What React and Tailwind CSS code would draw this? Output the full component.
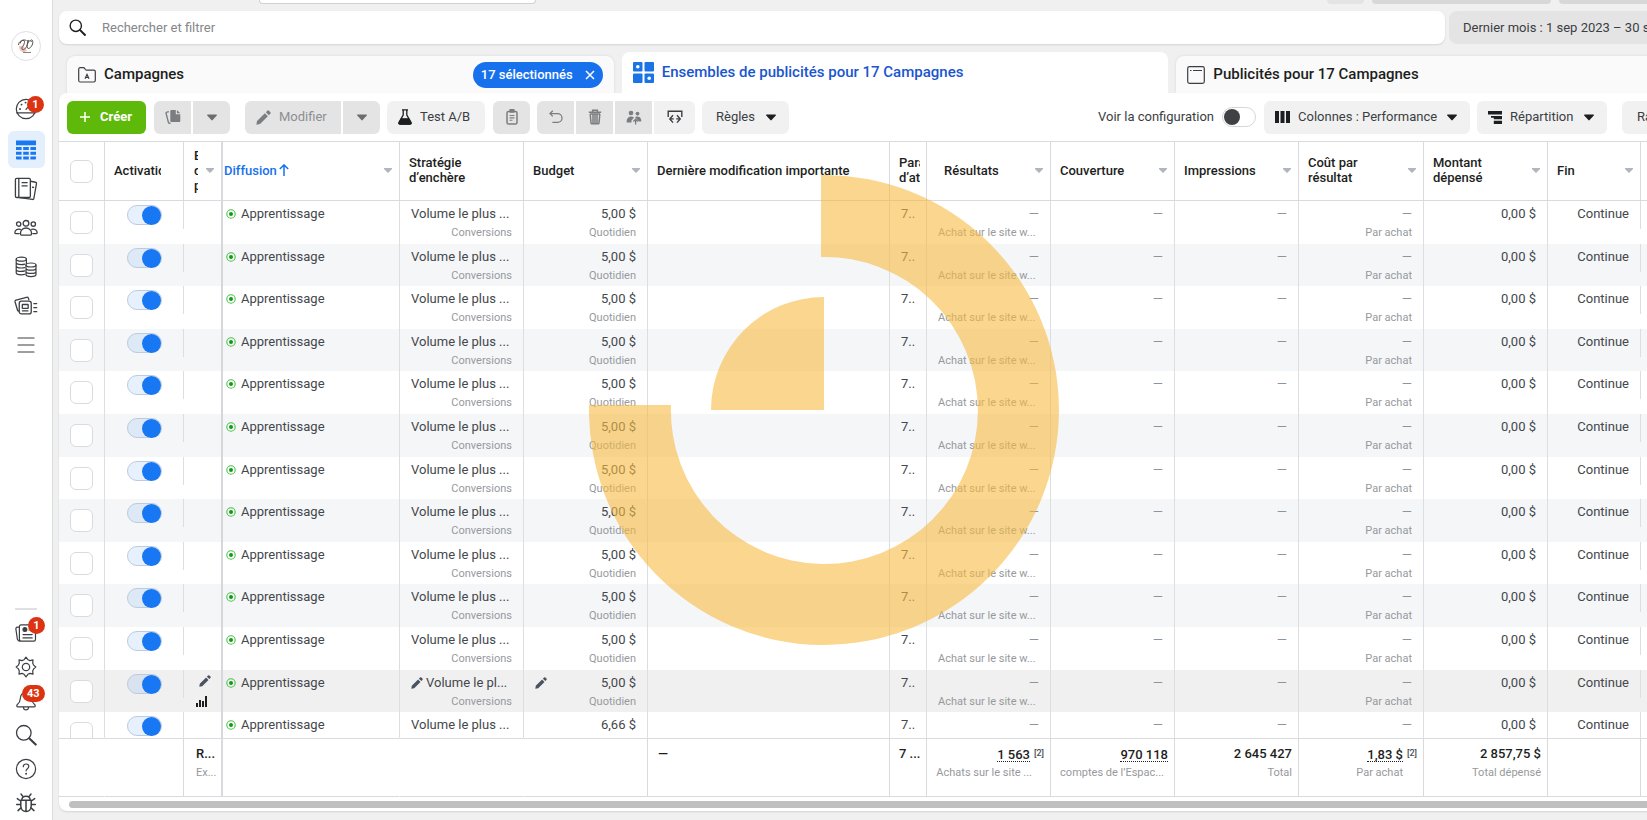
import { useState } from 'react';

const COLUMNS = [
  { id: 'diffusion', label: 'Diffusion', width: 'w-[177px]', sorted: true, caret: true },
  { id: 'strategie', label: 'Stratégie d’enchère', width: 'w-[124px]' },
  { id: 'budget', label: 'Budget', width: 'w-[124px]', caret: true },
  { id: 'modification', label: 'Dernière modification importante', width: 'w-[242px]' },
  { id: 'attribution', label: 'Paramètre d’attribution', width: 'w-[37px]', clipped: true },
  { id: 'resultats', label: 'Résultats', width: 'w-[124px]', caret: true, indent: true },
  { id: 'couverture', label: 'Couverture', width: 'w-[124px]', caret: true },
  { id: 'impressions', label: 'Impressions', width: 'w-[124px]', caret: true },
  { id: 'cout', label: 'Coût par résultat', width: 'w-[125px]', caret: true },
  { id: 'montant', label: 'Montant dépensé', width: 'w-[124px]', caret: true },
  { id: 'fin', label: 'Fin', width: 'w-[93px]', caret: true },
]

const ROWS = Array.from({ length: 13 }, (_, i) => ({
  id: i + 1,
  budget: i === 12 ? '6,66 $' : '5,00 $',
  hovered: i === 11,
}))

/* ---------- icons ---------- */

const Line = ({ size = 22, children, width = 1.2, className = '' }) => (
  <svg width={size} height={size} viewBox="0 0 22 22" fill="none" stroke="currentColor" strokeWidth={width} strokeLinecap="round" strokeLinejoin="round" className={className}>
    {children}
  </svg>
)

const Caret = ({ className = 'text-[#1c1e21]' }) => (
  <svg width="10" height="7" viewBox="0 0 10 7" className={`shrink-0 ${className}`}>
    <path d="M.6.5h8.8c.5 0 .7.6.4.9L5.6 6.1a.8.8 0 0 1-1.2 0L.2 1.4C-.1 1.1.1.5.6.5z" fill="currentColor" />
  </svg>
)

const HeaderCaret = () => (
  <svg width="8" height="5" viewBox="0 0 8 5" className="shrink-0 text-[#b0b6c0]">
    <path d="M0 0h8v1L4.6 4.6a.8.8 0 0 1-1.2 0L0 1z" fill="currentColor" />
  </svg>
)

const PencilIcon = ({ size = 12 }) => (
  <svg width={size} height={size} viewBox="0 0 12 12" fill="currentColor" className="shrink-0">
    <path d="M.3 11.7l.5-2.9 6.3-6.3 2.4 2.4-6.3 6.3zM7.9 1.7l1.1-1.1a1 1 0 0 1 1.4 0l1 1a1 1 0 0 1 0 1.4l-1.1 1.1z" />
  </svg>
)

const GaugeIcon = () => (
  <Line>
    <circle cx="11" cy="11" r="9.7" />
    <path d="M1.8 14.8h18.4M11 11.4l3.6-4.2" />
    <path d="M5 11h.1M6.5 6.6h.1M10.5 4.6h.1M16.8 11h.1" strokeWidth="1.8" />
  </Line>
)

const TableIcon = () => (
  <svg width="20" height="20" viewBox="0 0 20 20" fill="#1877f2">
    <path d="M0 .5h20v4.700H0zM0 7h5.600v3H0zM7.200 7h5.600v3H7.200zM14.400 7H20v3h-5.600zM0 11.700h5.600v3H0zM7.200 11.700h5.600v3H7.200zM14.400 11.700H20v3h-5.600zM0 16.400h5.600v3H1a1 1 0 0 1-1-1zM7.200 16.400h5.600v3H7.200zM14.400 16.400H20v2a1 1 0 0 1-1 1h-4.600z" />
  </svg>
)

const PagesIcon = () => (
  <Line size={24}>
    <path d="M2.5 1.2h11.3c.8 0 1.2.4 1.2 1.2v15.2c0 .8-.4 1.2-1.2 1.2H2.5c-.8 0-1.2-.4-1.2-1.2V2.4c0-.8.4-1.2 1.2-1.2zM4.4 1.2v17.6M7.4 5.200h4.600M7.400 8.200h4.600" />
    <path d="M15.200 3.900l4.500.9c.7.1 1 .5.9 1.200l-2.400 13.700c-.1.700-.5 1-1.200.9L5.200 18.900M17 9.400l.9.200" />
  </Line>
)

const PeopleIcon = () => (
  <Line size={24}>
    <circle cx="11" cy="6.700" r="2.600" />
    <circle cx="4.300" cy="7.400" r="2" />
    <circle cx="17.700" cy="7.400" r="2" />
    <path d="M6 16.800v-1.400a5 4.400 0 0 1 10 0v1.400c0 .5-.2.700-.7.700H6.700c-.5 0-.7-.2-.7-.7zM5.800 12.200c-2.800-.7-5 .9-5 3.200 0 .5.200.7.700.7h3.200M16.200 12.200c2.800-.7 5 .9 5 3.200 0 .5-.2.700-.7.700h-3.200" />
  </Line>
)

const CoinsIcon = () => (
  <Line>
    <ellipse cx="6.300" cy="3.200" rx="5.100" ry="2" />
    <path d="M1.200 3.200v13.600c0 1.200 2.300 2 5.100 2 1.200 0 2.600-.2 3.600-.5M11.400 3.200v4.200M1.200 6.600c0 1.200 2.300 2 5.100 2 1.300 0 2.600-.2 3.500-.5M1.200 10c0 1.200 2.300 2 5.100 2 1.200 0 2.400-.1 3.300-.4M1.200 13.400c0 1.200 2.300 2 5.100 2 1.200 0 2.600-.2 3.500-.5" />
    <ellipse cx="16" cy="9" rx="5" ry="2" />
    <path d="M11 9v9.600c0 1.200 2.200 2 5 2s5-.8 5-2V9M11 12.200c0 1.200 2.200 2 5 2s5-.8 5-2M11 15.400c0 1.200 2.200 2 5 2s5-.8 5-2" />
  </Line>
)

const CardsIcon = () => (
  <Line size={24}>
    <rect x="4.800" y="6.600" width="11" height="11.600" rx="2" />
    <rect x="7.600" y="9.600" width="5.400" height="3.600" rx=".4" />
    <path d="M7.800 15.500h5M18.200 8.800h2.600M18.200 12.500h2.600M18.200 16.200h2.600M4.400 15.700l-1-.4-2.400-8c-.2-.8.1-1.500.9-1.700l9.600-2.600c.8-.2 1.400.1 1.700.8l.4 1.400" />
  </Line>
)

const MenuIcon = () => (
  <Line>
    <path d="M3 4h16M3 11h16M3 18h16" />
  </Line>
)

const NewsIcon = () => (
  <Line>
    <path d="M6.200 2.800h12.600c1 0 1.700.6 1.700 1.700v12.800c0 1.200-.6 1.900-1.700 1.900H4.700c-1 0-1.700-.5-2.300-1.900L.9 7.200c-.2-1.200.3-1.900 1.600-2.100h1.700M6.200 2.800c-1 0-1.800.6-1.800 1.700v12.600c0 1.300.6 2.100 1.800 2.100" />
    <path d="M8 12.600h9.200M8 15.900h9.200M14 8h3" />
    <circle cx="9.900" cy="7.600" r="1.900" fill="currentColor" />
  </Line>
)

const GearIcon = () => (
  <Line>
    <circle cx="11" cy="11" r="3.700" />
    <path d="M11 1.200l1.900 2.500 2.100.9 3-.7-.3 3.100.9 2.100 2.200 1.900-2.200 1.900-.9 2.100.3 3.100-3-.7-2.100.9L11 20.800l-1.900-2.500-2.100-.9-3 .7.300-3.100-.9-2.100L1.200 11l2.200-1.900.9-2.100L4 3.900l3 .7 2.100-.9z" />
  </Line>
)

const BellIcon = () => (
  <Line>
    <path d="M11 2.500c-3.600 0-5.400 2.500-5.600 5.800-.2 3.200-.8 4.500-3 6.200-1.100.9-.8 2.400.7 2.400h15.800c1.500 0 1.800-1.500.7-2.400-2.200-1.700-2.800-3-3-6.200-.2-3.300-2-5.800-5.600-5.800zM8.400 17.200c.2 1.700 1.200 2.700 2.600 2.700s2.400-1 2.600-2.700" />
  </Line>
)

const SearchIcon = ({ size = 22, width = 1.3 }) => (
  <Line size={size} width={width}>
    <circle cx="8.800" cy="8.800" r="7.300" />
    <path d="M14.400 14.400l6.300 6.200" strokeWidth={width + 0.8} />
  </Line>
)

const HelpIcon = () => (
  <Line>
    <circle cx="11" cy="11" r="9.600" />
    <path d="M8.300 8.700c0-1.700 1.200-2.700 2.800-2.700s2.700 1 2.700 2.500c0 2.200-2.700 2.200-2.700 4.300" />
    <path d="M11.100 15.600v.1" strokeWidth="1.900" />
  </Line>
)

const BugIcon = () => (
  <Line width={1.5}>
    <path d="M5.800 8.200h10.400v5.900c0 3.200-2.200 5.500-5.200 5.500s-5.200-2.300-5.200-5.500zM6.800 8.200c0-2.500 1.700-4 4.200-4s4.200 1.500 4.200 4M11 8.200v11.400M8 4.600L6 2M14 4.600L16 2M5.600 9L2.300 6.600M16.400 9l3.300-2.400M5.600 12.600H1.700M16.400 12.600h3.900M6.200 15.600L3 18.600M15.800 15.600l3.200 3" />
  </Line>
)

/* ---------- side bar ---------- */

const TOP_LINKS = [
  { label: 'Ads Manager', icon: TableIcon, active: true },
  { label: 'Pages', icon: PagesIcon },
  { label: 'Audiences', icon: PeopleIcon },
  { label: 'Facturation', icon: CoinsIcon },
  { label: 'Publicités', icon: CardsIcon },
  { label: 'Tous les outils', icon: MenuIcon },
]

const BOTTOM_LINKS = [
  { label: 'Actualités', icon: NewsIcon, badge: '1' },
  { label: 'Paramètres', icon: GearIcon },
  { label: 'Notifications', icon: BellIcon, badge: '43' },
  { label: 'Rechercher', icon: SearchIcon },
  { label: 'Aide', icon: HelpIcon },
  { label: 'Signaler un problème', icon: BugIcon },
]

const Badge = ({ children, className }) => (
  <span className={`absolute flex h-[17px] items-center justify-center rounded-full bg-[#dc3312] text-[11px] font-bold leading-none text-white ${className}`}>
    {children}
  </span>
)

function SideBar() {
  return (
    <nav className="flex w-[53px] shrink-0 flex-col items-center border-r border-[#dcdddf] bg-white text-[#3b3e43]">
      <a href="#compte" aria-label="Compte" className="mt-[31px] flex size-[30px] items-center justify-center rounded-full border border-[#dddfe2]">
        <svg width="18" height="18" viewBox="0 0 18 18" fill="none">
          <path d="M2 9c2-1 5 0 7 3s-1 3-3 3-4-3-4-6z" fill="#eec3b3" />
          <path d="M3 6.500c1-3.500 5-4.500 4.500-1s-3.500 5-2.500 6.500 3 .5 4.500-2.500 2-5 1.500-6.500c-.5 3.500-1.500 6.500-.5 8s4-.5 5-4-.5-5-2-3.500M1.500 8c0-4 5-6 8-4.500M10.500 6c1-2 3.500-3.500 4-1" stroke="#55504d" strokeWidth="1" />
          <path d="M6 15.500h8" stroke="#8b8380" strokeWidth="1" />
        </svg>
      </a>

      <a href="#apercu" aria-label="Aperçu du compte" className="relative mb-0.5 mt-7 flex h-[39px] w-full items-center justify-center">
        <GaugeIcon />
        <Badge className="left-[27px] top-[7px] w-[17px]">1</Badge>
      </a>
      {TOP_LINKS.map(({ label, icon: Icon, active }) => (
        <a key={label} href="#outil" aria-label={label} className="flex h-[39px] w-full items-center justify-center">
          <span className={`flex size-[37px] items-center justify-center rounded-md ${active ? 'bg-[#e4effd]' : ''}`}>
            <Icon />
          </span>
        </a>
      ))}

      <div className="mt-auto h-0.5 w-[22px] bg-[#dfe0e2]" />
      <div className="mt-[6px] w-full">
        {BOTTOM_LINKS.map(({ label, icon: Icon, badge }) => (
          <a key={label} href="#outil" aria-label={label} className="relative flex h-[34px] items-center justify-center">
            <Icon />
            {badge && <Badge className={badge.length > 1 ? 'left-[22px] top-px px-[5px]' : 'left-7 top-px w-[17px]'}>{badge}</Badge>}
          </a>
        ))}
      </div>
    </nav>
  )
}

/* ---------- top part ---------- */

function SearchRow() {
  return (
    <div className="mt-[7px] flex gap-1">
      <label className="flex h-[33px] flex-1 items-center rounded-lg bg-white pl-[10px] text-[#1c1e21] shadow-[0_1px_2px_rgba(0,0,0,0.12)]">
        <SearchIcon size={17} width={1.8} />
        <input
          type="text"
          aria-label="Rechercher et filtrer"
          placeholder="Rechercher et filtrer"
          className="ml-4 h-8 flex-1 text-[13px] outline-none placeholder:text-[#84878c]"
        />
      </label>
      <button className="flex h-[33px] w-[282px] items-center justify-between whitespace-nowrap rounded-lg bg-[#e4e4e4] px-[14px] text-[13px] text-[#3b3e43]">
        Dernier mois : 1 sep 2023 – 30 sep 2023
        <Caret />
      </button>
    </div>
  )
}

function Tabs() {
  return (
    <div className="mt-2 grid grid-cols-3 items-end gap-2 px-2 text-[15px] font-medium text-[#1c1e21]">
      <div className="flex h-[37px] items-center rounded-t-lg bg-[#fafafa] pl-[11px] pr-[11px] shadow-[0_0_3px_rgba(0,0,0,0.10)]">
        <button className="flex items-center gap-2">
          <svg width="18" height="16" viewBox="0 0 18 16" fill="none" stroke="#3b3e43" strokeWidth="1.2">
            <path d="M.7 13.300V2.200C.7 1.300 1.200.7 2.200.7h3.200c.6 0 .9.200 1.200.6l.8 1.200c.3.400.6.600 1.200.6h7.200c1 0 1.500.5 1.500 1.500v8.700c0 1.100-.5 1.700-1.500 1.700H2.200c-1 0-1.500-.6-1.500-1.700z" />
            <path d="M7 11.800l2-4.300 2 4.300M7.800 10.500h2.400" />
          </svg>
          Campagnes
        </button>
        <button className="ml-auto flex h-[26px] items-center gap-3 rounded-full bg-[#1771ed] px-2 text-[13px] font-medium text-white">
          17 sélectionnés
          <svg width="10" height="10" viewBox="0 0 10 10" stroke="currentColor" strokeWidth="1.5">
            <path d="M1 1l8 8M9 1L1 9" />
          </svg>
        </button>
      </div>
      <button className="flex h-[41px] items-center gap-2 rounded-t-lg bg-white pl-[11px] text-[#1a56cf]">
        <svg width="21" height="21" viewBox="0 0 21 21" fill="#1b74e4">
          <rect width="9.500" height="9.500" rx="1" />
          <rect x="11.500" width="9.500" height="9.500" rx="1" />
          <rect y="11.500" width="9.500" height="9.500" rx="1" />
          <rect x="11.500" y="11.500" width="9.500" height="9.500" rx="1" />
          <circle cx="4.800" cy="4.800" r="1.800" fill="#fff" />
          <circle cx="16.200" cy="16.200" r="1.800" fill="#fff" />
        </svg>
        Ensembles de publicités pour 17 Campagnes
      </button>
      <button className="flex h-[37px] items-center gap-2 rounded-t-lg bg-[#fafafa] pl-[11px] shadow-[0_0_3px_rgba(0,0,0,0.10)]">
        <svg width="18" height="18" viewBox="0 0 18 18" fill="none" stroke="#3b3e43" strokeWidth="1.2">
          <rect x=".7" y=".7" width="16.600" height="16.600" rx="1.800" />
          <path d="M6 4.500h9M3 4.500h1.500" />
        </svg>
        Publicités pour 17 Campagnes
      </button>
    </div>
  )
}

function ToolBar() {
  const [config, setConfig] = useState(false)

  return (
    <div className="flex h-12 items-center whitespace-nowrap px-2 text-[13px] text-[#3b3e43]">
      <button className="flex h-[33px] w-[79px] items-center gap-[10px] rounded-md bg-[#5fb90b] pl-[13px] font-bold text-white">
        <svg width="10" height="10" viewBox="0 0 10 10" stroke="currentColor" strokeWidth="1.5"><path d="M5 0v10M0 5h10" /></svg>
        Créer
      </button>

      <div className="ml-2 flex gap-0.5 text-[#7b7d80]">
        <button aria-label="Dupliquer" className="flex h-[33px] w-[37px] items-center justify-center rounded-l-md bg-[#e4e4e4]">
          <svg width="16" height="16" viewBox="0 0 16 16" fill="currentColor">
            <path d="M6.500 1h4.300v4.200h4.500v6.600c0 .8-.4 1.200-1.200 1.200H6.500c-.8 0-1.200-.4-1.200-1.200V2.200C5.300 1.400 5.700 1 6.500 1zM11.900 1l3.400 3.200h-3.400z" />
            <path d="M3.900 2.600l-2 .5c-.7.200-1 .6-.8 1.300l2.300 9c.2.700.6 1 1.300.8l.8-.2" fill="none" stroke="currentColor" strokeWidth="1.4" />
          </svg>
        </button>
        <button aria-label="Options de duplication" className="flex h-[33px] w-[37px] items-center justify-center rounded-r-md bg-[#e4e4e4]"><Caret className="text-[#6b6d70]" /></button>
      </div>

      <div className="ml-[15px] flex gap-0.5 text-[#8d8f92]">
        <button className="flex h-[33px] w-24 items-center gap-2 rounded-l-md bg-[#e4e4e4] pl-[11px]">
          <span className="text-[#7b7d80]"><PencilIcon size={15} /></span>
          Modifier
        </button>
        <button aria-label="Options de modification" className="flex h-[33px] w-[37px] items-center justify-center rounded-r-md bg-[#e4e4e4]"><Caret className="text-[#6b6d70]" /></button>
      </div>

      <button className="ml-[7px] flex h-[33px] w-[98px] items-center gap-2 rounded-md bg-[#f1f1f1] pl-[11px]">
        <svg width="14" height="16" viewBox="0 0 14 16" fill="none" stroke="#1c1e21" strokeWidth="1.3">
          <path d="M4 .8h6M5.200 1v5L1 13.400c-.5 1 0 1.700 1 1.700h10c1 0 1.500-.7 1-1.700L8.800 6V1" />
          <path d="M3.300 9.800h7.400l2.100 4.300-.8.900H2l-.8-.9z" fill="#1c1e21" />
        </svg>
        Test A/B
      </button>

      <button aria-label="Presse-papiers" className="ml-2 flex h-[33px] w-[37px] items-center justify-center rounded-md bg-[#e4e4e4] text-[#7b7d80]">
        <svg width="12" height="16" viewBox="0 0 12 16" fill="none" stroke="currentColor" strokeWidth="1.5">
          <rect x="1" y="2.500" width="10" height="12.500" rx="1.600" />
          <path d="M3.600 6.500h4.800M3.600 8.900h4.800M3.600 11.300h2.800" strokeWidth="1.1" />
          <rect x="3.300" y="0" width="5.400" height="3.800" rx="1" fill="currentColor" stroke="none" />
        </svg>
      </button>

      <div className="ml-[7px] flex gap-0.5 text-[#7b7d80]">
        <button aria-label="Annuler" className="flex h-[33px] w-[37px] items-center justify-center rounded-l-md bg-[#e4e4e4]">
          <svg width="14" height="14" viewBox="0 0 14 14" fill="none" stroke="currentColor" strokeWidth="1.3">
            <path d="M3.800.8L1 3.600l2.800 2.800M1 3.600h7.600a4.200 4.200 0 0 1 0 8.800H3.400" />
          </svg>
        </button>
        <button aria-label="Supprimer" className="flex h-[33px] w-[37px] items-center justify-center bg-[#e4e4e4]">
          <svg width="14" height="16" viewBox="0 0 14 16" fill="none" stroke="currentColor" strokeWidth="1.5">
            <path d="M.8 3.200h12.400M4.600 3V1.200h4.800V3M2.200 5l.8 8.900c0 .6.400.9.900.9h6.200c.5 0 .9-.3.900-.9l.8-8.900M5 5v9M7 5v9M9 5v9M2 5h10" />
          </svg>
        </button>
        <button aria-label="Partager" className="flex h-[33px] w-[37px] items-center justify-center bg-[#e4e4e4]">
          <svg width="16" height="15" viewBox="0 0 16 15" fill="currentColor">
            <circle cx="5" cy="3" r="2.300" />
            <circle cx="11.500" cy="3.600" r="1.900" />
            <path d="M.7 12.500C.4 9 2.200 6.600 5 6.600c1.300 0 2.300.4 3 1.200L5.500 10.600v1.900zM9.300 6.900c2.800-1.300 6 .5 6 3.600 0 .8-.3 1-1 1h-1.400l-3.200-3.600z" />
            <path d="M7.400 11.500l2.200-2.300 2.200 2.300M9.600 9.500v5" fill="none" stroke="currentColor" strokeWidth="1.3" />
          </svg>
        </button>
        <button aria-label="Échanger" className="flex h-[33px] w-[41px] items-center justify-center rounded-r-md bg-[#f1f1f1] text-[#3b3e43]">
          <svg width="16" height="15" viewBox="0 0 16 15" fill="none" stroke="currentColor" strokeWidth="1.4">
            <path d="M1.200 7V1.200h13.600V7" />
            <path d="M6 5.200L2.800 8.900 6 12.600M10 5.200l3.200 3.700-3.200 3.700M3.200 8.900h3.600M12.800 8.900H9.200" />
          </svg>
        </button>
      </div>

      <button className="ml-[7px] flex h-[33px] w-[87px] items-center justify-between rounded-md bg-[#f1f1f1] pl-[14px] pr-[13px]">
        Règles
        <Caret />
      </button>

      <div className="ml-auto flex items-center">
        <label className="flex cursor-pointer items-center gap-2">
          Voir la configuration
          <input type="checkbox" checked={config} onChange={() => setConfig(prev => !prev)} className="peer sr-only" />
          <span className="flex h-5 w-[34px] items-center rounded-full border border-[#d5d6d8] bg-white px-px peer-checked:justify-end">
            <span className="size-4 rounded-full bg-[#3f4144]" />
          </span>
        </label>
        <button className="ml-2 flex h-[33px] w-[206px] items-center rounded-md bg-[#f1f1f1] pl-[11px] pr-[13px]">
          <svg width="15" height="12" viewBox="0 0 15 12" fill="#1c1e21" className="mr-2"><path d="M0 0h4v12H0zM5.500 0h4v12h-4zM11 0h4v12h-4z" /></svg>
          Colonnes : Performance
          <span className="ml-auto"><Caret /></span>
        </button>
        <button className="ml-[7px] flex h-[33px] w-[130px] items-center rounded-md bg-[#f1f1f1] pl-[11px] pr-[13px]">
          <svg width="14" height="13" viewBox="0 0 14 13" fill="#1c1e21" className="mr-2"><path d="M0 0h14v3.400H0zM3 5h11v3.200H5.800v-1.400H3zM5.800 9.700H14V13H5.800z" /></svg>
          Répartition
          <span className="ml-auto"><Caret /></span>
        </button>
        <button className="ml-[15px] flex h-[33px] w-[101px] items-center justify-between rounded-md bg-[#f1f1f1] pl-[15px] pr-[13px]">
          Rapports
          <Caret />
        </button>
      </div>
    </div>
  )
}

/* ---------- table ---------- */

const CheckBox = ({ label }) => (
  <input type="checkbox" aria-label={label} className="mx-auto block size-[23px] appearance-none rounded-md border border-[#d9dbde] bg-white checked:bg-[#1877f2]" />
)

function HeadCell({ column }) {
  const { label, caret, sorted, clipped, indent } = column
  return (
    <th scope="col" className={`h-[60px] border-b border-r border-t border-[#d8dadd] bg-white p-0 pb-0.5 text-left font-medium ${sorted ? 'text-[#1771ed]' : ''}`}>
      <div className={`flex items-center justify-between pr-[7px] ${sorted ? 'pl-px' : indent ? 'pl-[17px]' : 'pl-[9px]'}`}>
        {clipped
          ? <span className="w-[21px] shrink-0 overflow-hidden">{label}</span>
          : <span className={`flex items-center ${['strategie', 'cout', 'montant'].includes(column.id) ? 'w-16' : 'whitespace-nowrap'}`}>
            {label}
            {sorted && (
              <svg width="10" height="12" viewBox="0 0 10 12" fill="none" stroke="currentColor" strokeWidth="1.5" className="ml-[2px]">
                <path d="M5 12V1M.8 5L5 .9 9.200 5" />
              </svg>
            )}
          </span>}
        {caret && <HeaderCaret />}
      </div>
    </th>
  )
}

const Cell = ({ children, sub, className = '' }) => (
  <td className={`border-r border-[#dcdee1] py-0 pl-[11px] pr-[11px] align-top leading-[19px] ${className}`}>
    <div className="overflow-hidden whitespace-nowrap pt-[3px]">
      {children}
      {sub && <div className="text-right text-[11px] text-[#97999d]">{sub}</div>}
    </div>
  </td>
)

const Dash = () => <div className="text-right text-[#8d949e]">—</div>

function Row({ row, index }) {
  const [on, setOn] = useState(true)
  const shade = row.hovered ? 'bg-[#f0f0f0]' : index % 2 ? 'bg-[#f4f6f8]' : 'bg-white'

  return (
    <tr className={`${shade} ${(index % 5) % 2 ? 'h-[42px]' : 'h-[43px]'}`}>
      <td className="border-r border-[#dcdee1] p-0"><CheckBox label={`Sélectionner la ligne ${row.id}`} /></td>
      <td className="p-0 align-top">
        <div className="h-7 border-r border-[#dcdee1] pt-1">
          <label className="mx-auto block w-[35px]">
            <input type="checkbox" aria-label={`Activer la ligne ${row.id}`} checked={on} onChange={() => setOn(prev => !prev)} className="peer sr-only" />
            <span className="flex h-5 w-[35px] items-center rounded-full border border-[#bccbde] bg-[#1877f2]/10 peer-checked:justify-end">
              <span className="size-[19px] shrink-0 rounded-full bg-[#1877f2]" />
            </span>
          </label>
        </div>
      </td>
      <td className="border-r-2 border-[#d5d7da] p-0 align-top">
        {row.hovered && (
          <div className="flex flex-col gap-2 pl-3 pt-[5px] text-[#4b5361]">
            <span className="pl-[3px]"><PencilIcon /></span>
            <svg width="11" height="12" viewBox="0 0 11 12" fill="#1c1e21"><path d="M0 8h2v4H0zM3 5h2v7H3zM6 6h2v6H6zM9 1h2v11H9z" /></svg>
          </div>
        )}
      </td>
      <td className="border-r border-[#dcdee1] p-0 align-top leading-[19px]">
        <div className="flex items-center gap-[5px] pl-[3px] pt-[3px]">
          <svg width="10" height="10" viewBox="0 0 10 10" fill="none"><circle cx="5" cy="5" r="4.200" stroke="#4cc04c" strokeWidth="1.1" /><circle cx="5" cy="5" r="2" fill="#0f9d0f" /></svg>
          Apprentissage
        </div>
      </td>
      <Cell sub="Conversions">
        {row.hovered
          ? <div className="flex items-center gap-[3px]"><span className="text-[#4b5361]"><PencilIcon /></span>Volume le pl...</div>
          : <div>Volume le plus ...</div>}
      </Cell>
      <Cell sub="Quotidien">
        <div className="flex items-center">
          {row.hovered && <span className="text-[#4b5361]"><PencilIcon /></span>}
          <span className="ml-auto">{row.budget}</span>
        </div>
      </Cell>
      <Cell />
      <Cell>7..</Cell>
      <Cell sub={<span className="pr-1">Achat sur le site w...</span>}><Dash /></Cell>
      <Cell><Dash /></Cell>
      <Cell><Dash /></Cell>
      <Cell sub="Par achat"><Dash /></Cell>
      <Cell className="text-right">0,00 $</Cell>
      <td className="p-0 align-top leading-[19px]">
        <div className="h-7 border-r border-[#dcdee1] pr-[11px] pt-[3px] text-right">Continue</div>
      </td>
      <td className="p-0" />
    </tr>
  )
}

const Total = ({ children, sub, className = '' }) => (
  <td className={`h-[59px] border-b border-r border-t border-[#d8dadd] bg-white px-[6px] py-0 align-top leading-[19px] ${className}`}>
    <div className="overflow-hidden whitespace-nowrap pt-[5px] font-medium text-[#1c1e21]">
      {children}
      {sub && <div className="text-[11px] font-normal text-[#97999d]">{sub}</div>}
    </div>
  </td>
)

const Noted = ({ children }) => (
  <div className="flex items-center justify-end gap-1">
    <a href="#note" className="h-4 border-b border-dotted border-[#1c1e21] leading-[17px]">{children}</a>
    <span className="text-[9px] text-[#4b4f56]">[2]</span>
  </div>
)

function AdSetTable() {
  return (
    <div className="min-h-0 flex-1 overflow-hidden">
      <table className="w-full table-fixed border-separate border-spacing-0 text-[13px] text-[#44474c]">
        <colgroup>
          <col className="w-[46px]" />
          <col className="w-[79px]" />
          <col className="w-[39px]" />
          {COLUMNS.map(column => <col key={column.id} className={column.width} />)}
          <col />
        </colgroup>
        <thead className="sticky top-0 z-10 leading-[15px] text-[#1c1e21]">
          <tr>
            <th className="border-b border-r border-t border-[#d8dadd] bg-white p-0"><CheckBox label="Tout sélectionner" /></th>
            <th scope="col" className="border-b border-r border-t border-[#d8dadd] bg-white p-0 pb-0.5 text-left font-medium">
              <div className="ml-[9px] w-[47px] overflow-hidden whitespace-nowrap">Activation</div>
            </th>
            <th scope="col" className="border-b border-r-2 border-t border-[#d8dadd] bg-white p-0 pb-0.5 text-left font-medium">
              <div className="flex items-center justify-between pl-[10px] pr-[7px]">
                <span className="w-1 overflow-hidden">Ensemble de publicités</span>
                <HeaderCaret />
              </div>
            </th>
            {COLUMNS.map(column => <HeadCell key={column.id} column={column} />)}
            <th className="border-b border-t border-[#d8dadd] bg-white p-0" />
          </tr>
        </thead>
        <tbody>
          {ROWS.map((row, index) => <Row key={row.id} row={row} index={index} />)}
        </tbody>
        <tfoot className="sticky bottom-0 z-10">
          <tr>
            <Total className="border-r-white" />
            <Total />
            <td className="border-b border-r-2 border-t border-[#d8dadd] bg-white py-0 pl-3 align-top leading-[19px]">
              <div className="whitespace-nowrap pt-[5px] font-medium text-[#1c1e21]">R...</div>
              <div className="text-[11px] text-[#97999d]">Ex...</div>
            </td>
            <Total className="border-r-white" />
            <Total className="border-r-white" />
            <Total />
            <Total><span className="pl-1">—</span></Total>
            <Total><span className="pl-[3px]">7 ...</span></Total>
            <Total className="text-right" sub={<span className="pr-3">Achats sur le site ...</span>}><Noted>1 563</Noted></Total>
            <Total className="text-right" sub={<span className="pr-1">comptes de l’Espac...</span>}>
              <div className="flex h-[19px] items-center justify-end">
                <a href="#couverture" className="h-4 border-b border-dotted border-[#1c1e21] leading-[17px]">970 118</a>
              </div>
            </Total>
            <Total className="text-right" sub="Total">2 645 427</Total>
            <Total className="text-right" sub={<span className="pr-[14px]">Par achat</span>}><Noted>1,83 $</Noted></Total>
            <Total className="text-right" sub="Total dépensé">2 857,75 $</Total>
            <Total />
            <Total />
          </tr>
        </tfoot>
      </table>
    </div>
  )
}

/* big loading wheel over the page */
const Loader = () => (
  <div className="pointer-events-none fixed inset-0 z-20 flex items-center justify-center">
    <svg width="470" height="470" viewBox="0 0 470 470" fill="#f7bb43" className="opacity-60">
      <path d="M232 0A235 235 0 1 1 0 230H82A153.500 153.500 0 1 0 232 82Z" />
      <path d="M235 122V235H122A113 113 0 0 1 235 122Z" />
    </svg>
  </div>
)

export default function App() {
  return (
    <div className="flex h-screen overflow-hidden bg-[#f0f0f0] font-['Roboto',sans-serif]">
      <SideBar />
      <main className="min-w-0 flex-1 overflow-hidden">
        <div className="-mr-[84px] flex h-full flex-col pb-[9px] pl-[6px]">
          <div className="flex h-1 items-start pr-2">
            <div className="ml-[200px] h-1 w-[277px] rounded-b-md border-x border-b border-[#cfd0d2] bg-white" />
            <div className="ml-auto flex gap-2">
              <div className="h-1 w-[37px] rounded-b-md bg-[#e4e4e4]" />
              <div className="h-1 w-[179px] rounded-b-md bg-[#d8d8d8]" />
              <div className="h-1 w-[164px] rounded-b-md bg-[#d8d8d8]" />
            </div>
          </div>
          <SearchRow />
          <Tabs />
          <section className="flex min-h-0 flex-1 flex-col overflow-hidden rounded-lg bg-white shadow-[0_1px_2px_rgba(0,0,0,0.12)]">
            <ToolBar />
            <AdSetTable />
            <div className="flex h-[14px] items-center pl-[10px]">
              <div className="h-[7px] flex-1 rounded-full bg-[#bfbfbf]" />
            </div>
          </section>
        </div>
      </main>
      <Loader />
    </div>
  )
}
